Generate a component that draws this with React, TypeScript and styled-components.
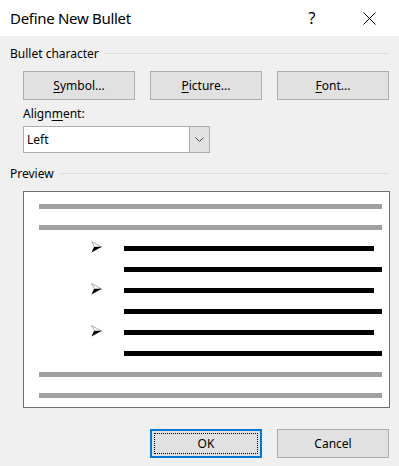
import React from "react";
import styled, { createGlobalStyle } from "styled-components";

const Global = createGlobalStyle`
  html, body { margin: 0; padding: 0; background: #f0f0f0; }
  body { font-family: "Noto Sans", "Liberation Sans", sans-serif; color: #000; }
`;

const Dialog = styled.div`
  width: 399px;
  height: 466px;
  background: #f0f0f0;
  display: flex;
  flex-direction: column;
  font-size: 12px;
  overflow: hidden;
`;

const TitleBar = styled.div`
  height: 36px;
  background: #fff;
  display: flex;
  align-items: center;
  padding-left: 10px;
`;

const Title = styled.div`
  flex: 1;
  font-size: 15px;
  letter-spacing: -0.3px;
  margin-top: -1px;
`;

const CaptionButton = styled.div<{ $w: number }>`
  width: ${(p) => p.$w}px;
  height: 36px;
  display: flex;
  align-items: center;
  justify-content: center;
  font-size: 16px;
`;

const Body = styled.div`
  padding: 0 10px 0 10px;
  display: flex;
  flex-direction: column;
`;

const GroupHeader = styled.div<{ $top: number }>`
  display: flex;
  align-items: center;
  gap: 6px;
  height: 16px;
  margin-top: ${(p) => p.$top}px;
  &::after {
    content: "";
    flex: 1;
    height: 1px;
    background: #dcdcdc;
  }
`;

const Indented = styled.div`
  padding-left: 13px;
`;

const ButtonRow = styled.div`
  display: flex;
  gap: 15px;
  margin-top: 10px;
  padding-left: 13px;
`;

const PushButton = styled.button<{ $default?: boolean }>`
  width: 112px;
  height: 29px;
  background: #e1e1e1;
  border: ${(p) => (p.$default ? "2px solid #0078d7" : "1px solid #adadad")};
  font-family: inherit;
  font-size: 12px;
  color: #000;
  padding: 0;
  display: flex;
  align-items: center;
  justify-content: center;
  position: relative;
  box-sizing: border-box;
  cursor: default;
`;

const FocusRing = styled.span`
  position: absolute;
  inset: 2px;
  border: 1px dotted #000;
`;

const Key = styled.span`
  text-decoration: underline;
  text-underline-offset: 2px;
`;

const FieldLabel = styled.div`
  margin-top: 6px;
  height: 16px;
  line-height: 16px;
`;

const Select = styled.div`
  margin-top: 4px;
  width: 187px;
  height: 27px;
  box-sizing: border-box;
  border: 1px solid #adadad;
  background: #fff;
  display: flex;
  align-items: stretch;
`;

const SelectValue = styled.div`
  flex: 1;
  display: flex;
  align-items: center;
  padding-left: 3px;
`;

const SelectArrow = styled.div`
  width: 20px;
  box-sizing: border-box;
  border-left: 1px solid #adadad;
  background: #e1e1e1;
  display: flex;
  align-items: center;
  justify-content: center;
`;

const PreviewBox = styled.div`
  margin: 10px 0 0 13px;
  width: 367px;
  height: 217px;
  box-sizing: border-box;
  border: 1px solid #707070;
  background: #fff;
  padding: 12px 7px 0 15px;
  display: flex;
  flex-direction: column;
  gap: 16px;
`;

const PreviewRow = styled.div<{ $indent: number }>`
  height: 5px;
  display: flex;
  align-items: center;
  padding-left: ${(p) => p.$indent}px;
`;

const BulletCell = styled.div`
  width: 85px;
  padding-left: 52px;
  box-sizing: border-box;
  height: 5px;
  display: flex;
  align-items: center;
  margin-left: -85px;
`;

const Bar = styled.div<{ $tone: "gray" | "black"; $trim: number }>`
  flex: 1;
  height: 5px;
  margin-right: ${(p) => p.$trim}px;
  background: ${(p) => (p.$tone === "gray" ? "#a0a0a0" : "#000")};
`;

const Footer = styled.div`
  display: flex;
  justify-content: flex-end;
  gap: 15px;
  margin-top: 21px;
`;

const Bullet = () => (
  <svg width="12" height="15" viewBox="0 0 12 15" style={{ flex: "none" }}>
    <polygon points="0.5,0.5 10.5,6 3.5,6" fill="#fff" stroke="#9a8f99" strokeWidth="0.8" />
    <polygon points="3,6 10.8,5.8 0.5,11.5" fill="#000" />
  </svg>
);

const Chevron = () => (
  <svg width="9" height="5" viewBox="0 0 9 5">
    <polyline points="0.5,0.5 4.5,4.5 8.5,0.5" fill="none" stroke="#444" strokeWidth="1" />
  </svg>
);

const CloseIcon = () => (
  <svg width="13" height="13" viewBox="0 0 13 13">
    <line x1="0.5" y1="0.5" x2="12.5" y2="12.5" stroke="#000" strokeWidth="1" />
    <line x1="12.5" y1="0.5" x2="0.5" y2="12.5" stroke="#000" strokeWidth="1" />
  </svg>
);

type Line = { tone: "gray" | "black"; indent: number; trim: number; bullet?: boolean };

const lines: Line[] = [
  { tone: "gray", indent: 0, trim: 0 },
  { tone: "gray", indent: 0, trim: 0 },
  { tone: "black", indent: 85, trim: 8, bullet: true },
  { tone: "black", indent: 85, trim: 0 },
  { tone: "black", indent: 85, trim: 8, bullet: true },
  { tone: "black", indent: 85, trim: 0 },
  { tone: "black", indent: 85, trim: 8, bullet: true },
  { tone: "black", indent: 85, trim: 0 },
  { tone: "gray", indent: 0, trim: 0 },
  { tone: "gray", indent: 0, trim: 0 },
];

export default function App() {
  return (
    <>
      <Global />
      <Dialog>
        <TitleBar>
          <Title>Define New Bullet</Title>
          <CaptionButton $w={46}>?</CaptionButton>
          <CaptionButton $w={11} />
          <CaptionButton $w={46}>
            <CloseIcon />
          </CaptionButton>
          <CaptionButton $w={7} />
        </TitleBar>
        <Body>
          <GroupHeader $top={9}>Bullet character</GroupHeader>
          <ButtonRow>
            <PushButton>
              <span><Key>S</Key>ymbol...</span>
            </PushButton>
            <PushButton>
              <span><Key>P</Key>icture...</span>
            </PushButton>
            <PushButton>
              <span><Key>F</Key>ont...</span>
            </PushButton>
          </ButtonRow>
          <Indented>
            <FieldLabel>
              Align<Key>m</Key>ent:
            </FieldLabel>
            <Select>
              <SelectValue>Left</SelectValue>
              <SelectArrow>
                <Chevron />
              </SelectArrow>
            </Select>
          </Indented>
          <GroupHeader $top={12}>Preview</GroupHeader>
          <PreviewBox>
            {lines.map((l, i) => (
              <PreviewRow key={i} $indent={l.indent}>
                {l.bullet && (
                  <BulletCell>
                    <Bullet />
                  </BulletCell>
                )}
                <Bar $tone={l.tone} $trim={l.trim} />
              </PreviewRow>
            ))}
          </PreviewBox>
          <Footer>
            <PushButton $default>
              <FocusRing />
              OK
            </PushButton>
            <PushButton>Cancel</PushButton>
          </Footer>
        </Body>
      </Dialog>
    </>
  );
}
